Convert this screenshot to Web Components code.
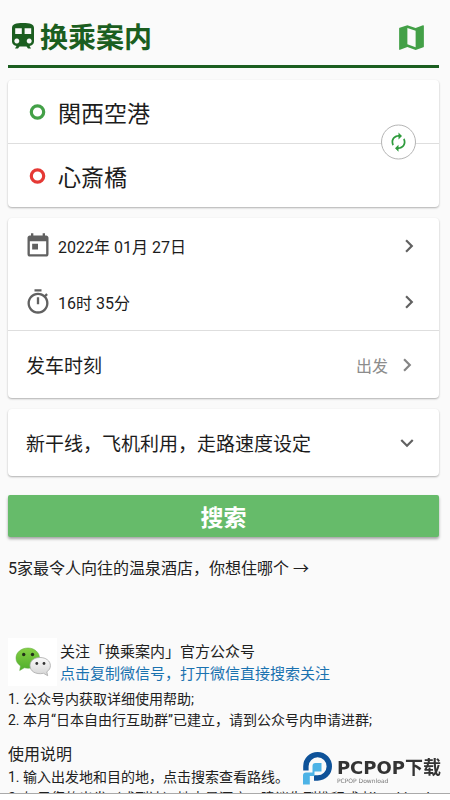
<!DOCTYPE html>
<html lang="zh-CN">
<head>
<meta charset="utf-8">
<meta name="viewport" content="width=device-width, initial-scale=1">
<title>换乘案内</title>
<style>
  html, body { margin: 0; height: 100%; }
  body {
    background: #fafafa;
    color: #212121;
    font-family: Roboto, "Noto Sans CJK SC", sans-serif;
    font-size: 16px;
  }
</style>
</head>
<body>
<transit-app></transit-app>

<script>
const define = (name, html, setup) => {
  const template = document.createElement('template');
  template.innerHTML = html;
  customElements.define(name, class extends HTMLElement {
    constructor() {
      super();
      this.attachShadow({ mode: 'open' }).append(template.content.cloneNode(true));
    }
    connectedCallback() { if (setup) setup(this, this.shadowRoot); }
  });
};

const ICONS = {
  train: ['0 0 22 26', '<path fill-rule="evenodd" d="M11 0C4 0 0 1 0 5V18.500C0 21 2 22.800 4.500 23L3 25.500H6L7.500 23.500H14.500L16 25.500H19L17.500 23C20 22.800 22 21 22 18.500V5C22 1 18 0 11 0ZM3.200 5.200H9.800V11H3.200ZM12.600 5.200H19.200V11H12.600ZM4.800 15.600a2.500 2.500 0 1 0 .01 0ZM17.200 15.600a2.500 2.500 0 1 0 .01 0Z"/>'],
  map: ['0 0 24 24', '<path d="M20.500 3l-.16.03L15 5.100 9 3 3.360 4.900c-.21.07-.36.25-.36.48V20.500c0 .28.22.5.5.5l.16-.03L9 18.900l6 2.100 5.640-1.900c.21-.07.36-.25.36-.48V3.500c0-.28-.22-.5-.5-.5zM15 19l-6-2.110V5l6 2.110V19z"/>'],
  today: ['0 0 24 24', '<path d="M19 3h-1V1h-2v2H8V1H6v2H5c-1.110 0-1.990.9-1.990 2L3 19c0 1.100.89 2 2 2h14c1.100 0 2-.9 2-2V5c0-1.100-.9-2-2-2zm0 16H5V8h14v11zM7 10h5v5H7z"/>'],
  timer: ['0 0 24 24', '<path d="M15 1H9v2h6V1zm-4 13h2V8h-2v6zm8.030-6.610l1.420-1.420c-.43-.51-.9-.99-1.410-1.410l-1.420 1.420C16.070 4.740 14.120 4 12 4c-4.970 0-9 4.030-9 9s4.020 9 9 9 9-4.030 9-9c0-2.120-.74-4.070-1.970-5.610zM12 20c-3.870 0-7-3.130-7-7s3.130-7 7-7 7 3.130 7 7-3.130 7-7 7z"/>'],
  right: ['0 0 24 24', '<path d="M10 6L8.590 7.410 13.170 12l-4.580 4.590L10 18l6-6z"/>'],
  down: ['0 0 24 24', '<path d="M16.590 8.590L12 13.170 7.410 8.590 6 10l6 6 6-6z"/>'],
  swap: ['0 0 24 24', '<path d="M12 6v3l4-4-4-4v3c-4.420 0-8 3.580-8 8 0 1.570.46 3.030 1.240 4.260L6.700 14.800c-.45-.83-.7-1.790-.7-2.800 0-3.310 2.690-6 6-6zm6.760 1.740L17.300 9.200c.44.84.7 1.790.7 2.800 0 3.310-2.690 6-6 6v-3l-4 4 4 4v-3c4.420 0 8-3.580 8-8 0-1.570-.46-3.030-1.240-4.260z"/>'],
  ring: ['0 0 28 28', '<circle cx="13.500" cy="14" r="6.200" fill="none" stroke="currentColor" stroke-width="3.200"/>'],
  wechat: ['0 0 49 48', `
    <defs>
      <linearGradient id="g" x1="0" y1="0" x2="0" y2="1"><stop offset="0" stop-color="#86cf45"/><stop offset="1" stop-color="#4fae2b"/></linearGradient>
      <linearGradient id="w" x1="0" y1="0" x2="0" y2="1"><stop offset="0" stop-color="#fbfbfb"/><stop offset="1" stop-color="#d4d4d4"/></linearGradient>
    </defs>
    <path fill="url(#g)" stroke="#58a83a" stroke-width=".5" d="M20 10C13 10 8 14.500 8 20c0 3.400 1.600 6 4.500 7.900L11.700 32.500 16.300 29.800C25 32 31.500 26.500 31.500 20 31.500 14.500 26.500 10 20 10Z"/>
    <circle cx="15.700" cy="16.500" r="1.700" fill="#223018"/><circle cx="24.500" cy="16.500" r="1.700" fill="#223018"/>
    <path fill="url(#w)" stroke="#aaa" stroke-width=".8" d="M32 19.500C26 19.500 22 23 22 27.700 22 33 27.500 37 35.500 35.300L39.700 37.700 38.800 33.800C41.200 32.200 42.400 30.200 42.400 27.700 42.400 23 38 19.500 32 19.500Z"/>
    <circle cx="28.800" cy="25.500" r="1.400" fill="#333"/><circle cx="36" cy="25.500" r="1.400" fill="#333"/>`],
  pop: ['0 0 30 34', `
    <path fill="none" stroke="#0e5299" stroke-width="5.400" d="M2.900 19.500V15.200A11.700 11.700 0 1 1 14.500 27H11"/>
    <path fill="#4db3e6" d="M12.500 12H18.500V20.500H11.500V25H6.800V33.500H0V24.500Q0 21.500 3 21.500H9.500V15Q9.500 12 12.500 12Z"/>`]
};

define('ui-icon', `<style>
  :host { display: block; flex: none; width: var(--w, 28px); height: var(--h, var(--w, 28px)); }
  svg { display: block; width: 100%; height: 100%; fill: currentColor; }
</style><svg aria-hidden="true"></svg>`, (el, root) => {
  const [box, shape] = ICONS[el.getAttribute('name')];
  const svg = root.querySelector('svg');
  svg.setAttribute('viewBox', box);
  svg.innerHTML = shape;
});

define('app-header', `<style>
  :host { display: flex; align-items: center; justify-content: space-between; height: 52px; padding: 13px 11px 0 4px; border-bottom: 3px solid #1b5e20; color: #1b5e20; }
  h1 { display: flex; align-items: center; gap: 6px; margin: 0; font-size: 28px; line-height: 40px; font-weight: 700; }
  h1 ui-icon { --w: 22px; --h: 26px; margin-bottom: 6px; }
  button { padding: 0; border: 0; background: none; color: #43a047; }
  button ui-icon { --w: 33px; margin-bottom: 4px; }
</style>
<h1><ui-icon name="train"></ui-icon><slot></slot></h1>
<button type="button" aria-label="地图"><ui-icon name="map"></ui-icon></button>`);

define('ui-card', `<style>
  :host { display: block; position: relative; background: #fff; border-radius: 4px; box-shadow: 0 1px 2px rgba(0,0,0,.3); }
</style><slot></slot>`);

define('card-row', `<style>
  :host { display: block; }
  :host([divided]) { border-top: 1px solid #dedede; }
  button { display: flex; align-items: center; gap: 6px; width: 100%; height: var(--row, 63px); padding: 0 17px 0 16px; border: 0; background: none; font: inherit; font-size: var(--size, 16px); color: #1c1c1c; text-align: left; }
  .label { flex: 1; }
  :host([indent]) button { padding-left: 18px; padding-right: 19px; }
  ::slotted([slot=end]) { color: #616161; --w: 26px; }
</style>
<button type="button"><slot name="icon"></slot><span class="label"><slot></slot></span><slot name="value"></slot><slot name="end"></slot></button>`);

define('swap-button', `<style>
  :host { position: absolute; right: 23px; top: 50%; transform: translateY(-50%); }
  button { display: grid; place-items: center; width: 35px; height: 35px; margin-bottom: 4px; padding: 0; border: 1px solid #b5b5b5; border-radius: 50%; background: #fff; color: #2e9b3c; --w: 21px; }
</style><button type="button" aria-label="交换出发地和目的地"><ui-icon name="swap"></ui-icon></button>`);

define('search-button', `<style>
  :host { display: block; }
  button { width: 100%; height: 42px; padding: 0; border: 0; border-radius: 2px; background: #66bb6a; color: #fff; font: inherit; font-size: 23px; font-weight: 700; box-shadow: 0 2px 3px rgba(0,0,0,.35); }
</style><button type="button"><slot></slot></button>`);

define('wechat-note', `<style>
  :host { display: block; }
  .top { display: flex; gap: 3px; }
  .pic { --w: 49px; --h: 48px; background: #fff; }
  p { margin: 0; font-size: 15px; line-height: 22px; padding-top: 3px; }
  a { color: #1a72b0; text-decoration: none; }
</style>
<div class="top"><ui-icon class="pic" name="wechat"></ui-icon><p><slot></slot><br><a href="#"><slot name="link"></slot></a></p></div>`);

define('note-list', `<style>
  :host { display: block; font-size: 14px; line-height: 21px; }
  h2 { margin: 0; font-size: 16px; line-height: 24px; font-weight: 400; }
  ::slotted(div) { white-space: nowrap; }
</style><h2><slot name="title"></slot></h2><slot></slot>`);

define('brand-mark', `<style>
  :host { position: fixed; right: 9px; bottom: 15px; }
  a { display: flex; gap: 4px; color: #333; text-decoration: none; }
  ui-icon { --w: 30px; --h: 34px; }
  .words { display: flex; flex-direction: column; padding-top: 7px; }
  b { font: 700 18px/19px "DejaVu Sans", "Noto Sans CJK SC", sans-serif; white-space: nowrap; }
  small { font: 6px/7px "DejaVu Sans", sans-serif; color: #777; }
</style>
<a href="#"><ui-icon name="pop"></ui-icon><span class="words"><b>PCPOP下载</b><small>PCPOP Download</small></span></a>`);

define('transit-app', `<style>
  :host { display: flex; flex-direction: column; height: 100vh; }
  main { flex: 1; min-height: 0; overflow: auto; scrollbar-width: none; padding: 0 11px 0 8px; }
  footer { flex: none; height: 6px; border-top: 1px solid #aaa; background: #fff; }
  ui-card { margin-top: 11px; }
  .stations { margin-top: 12px; --size: 23px; }
  .times { --row: 56px; }
  .wide { --row: 67px; --size: 19px; }
  .from { color: #43a047; }
  .to { color: #e53935; }
  .muted { color: #616161; }
  .value { color: #8c8c8c; font-size: 16px; }
  .wide .pale { color: #858585; }
  search-button { margin-top: 19px; }
  .promo { display: block; margin-top: 20px; line-height: 24px; color: inherit; text-decoration: none; }
  wechat-note { margin-top: 57px; }
  .steps { margin-top: 3px; }
  .guide { margin-top: 12px; }
</style>
<main>
  <app-header>换乘案内</app-header>
  <ui-card class="stations">
    <card-row lang="ja"><ui-icon slot="icon" class="from" name="ring"></ui-icon>関西空港</card-row>
    <card-row lang="ja" divided><ui-icon slot="icon" class="to" name="ring"></ui-icon>心斎橋</card-row>
    <swap-button></swap-button>
  </ui-card>
  <ui-card class="times">
    <card-row><ui-icon slot="icon" class="muted" name="today"></ui-icon>2022年 01月 27日<ui-icon slot="end" name="right"></ui-icon></card-row>
    <card-row><ui-icon slot="icon" class="muted" name="timer"></ui-icon>16时 35分<ui-icon slot="end" name="right"></ui-icon></card-row>
    <card-row class="wide" divided indent>发车时刻<span slot="value" class="value">出发</span><ui-icon slot="end" class="pale" name="right"></ui-icon></card-row>
  </ui-card>
  <ui-card>
    <card-row class="wide" indent>新干线，飞机利用，走路速度设定<ui-icon slot="end" name="down"></ui-icon></card-row>
  </ui-card>
  <search-button>搜索</search-button>
  <a class="promo" href="#">5家最令人向往的温泉酒店，你想住哪个 →</a>
  <wechat-note>关注「换乘案内」官方公众号<span slot="link">点击复制微信号，打开微信直接搜索关注</span></wechat-note>
  <note-list class="steps">
    <div>1. 公众号内获取详细使用帮助;</div>
    <div>2. 本月“日本自由行互助群”已建立，请到公众号内申请进群;</div>
  </note-list>
  <note-list class="guide">
    <span slot="title">使用说明</span>
    <div>1. 输入出发地和目的地，点击搜索查看路线。</div>
    <div>2. 如果您的出发（或到达）地点是酒店，建议先到携程或者booking h</div>
  </note-list>
</main>
<footer></footer>
<brand-mark></brand-mark>`);
</script>
</body>
</html>
